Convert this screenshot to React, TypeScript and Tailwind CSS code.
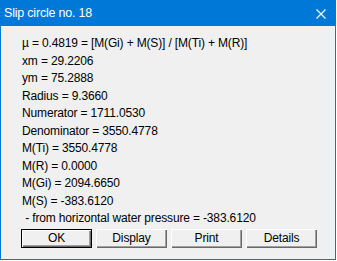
import React from "react";

const lines = [
  "µ = 0.4819 = [M(Gi) + M(S)] / [M(Ti) + M(R)]",
  "xm = 29.2206",
  "ym = 75.2888",
  "Radius = 9.3660",
  "Numerator = 1711.0530",
  "Denominator = 3550.4778",
  "M(Ti) = 3550.4778",
  "M(R) = 0.0000",
  "M(Gi) = 2094.6650",
  "M(S) = -383.6120",
  " - from horizontal water pressure = -383.6120",
];

function Button({ label, primary }: { label: string; primary?: boolean }) {
  return (
    <div
      className={
        "w-[71px] h-[19px] flex items-center justify-center bg-[#f0f0f0] text-[12px] tracking-[-0.15px] text-black " +
        (primary
          ? "border border-black shadow-[inset_1px_1px_0_#ffffff,inset_-1px_-1px_0_#696969,inset_-2px_-2px_0_#a0a0a0]"
          : "shadow-[inset_1px_1px_0_#ffffff,inset_-1px_-1px_0_#696969,inset_-2px_-2px_0_#a0a0a0]")
      }
    >
      {label}
    </div>
  );
}

export default function App() {
  return (
    <div className="w-[337px] h-[261px] bg-white font-['Liberation_Sans',Arial,sans-serif]">
      <div className="w-[336px] h-[260px] border border-[#0078d7] bg-[#f0f0f0] flex flex-col">
        {/* Title bar */}
        <div className="h-[25px] bg-[#0078d7] flex items-center justify-between pl-[3px] pr-[9px]">
          <span className="text-white text-[12.5px] leading-none tracking-[-0.2px]">Slip circle no. 18</span>
          <svg width="10" height="10" viewBox="0 0 10 10">
            <path d="M0.5 0.5 L9.5 9.5 M9.5 0.5 L0.5 9.5" stroke="#ffffff" strokeWidth="1.1" />
          </svg>
        </div>

        {/* Body */}
        <div className="pl-[21px] pt-[9px]">
          {lines.map((l, i) => (
            <div key={i} className="h-[17.5px] leading-[17.5px] text-[12px] tracking-[-0.15px] text-black whitespace-pre">
              {l}
            </div>
          ))}
        </div>

        <div className="flex gap-[4px] pl-[20px] mt-[1px]">
          <Button label="OK" primary />
          <Button label="Display" />
          <Button label="Print" />
          <Button label="Details" />
        </div>
      </div>
    </div>
  );
}
